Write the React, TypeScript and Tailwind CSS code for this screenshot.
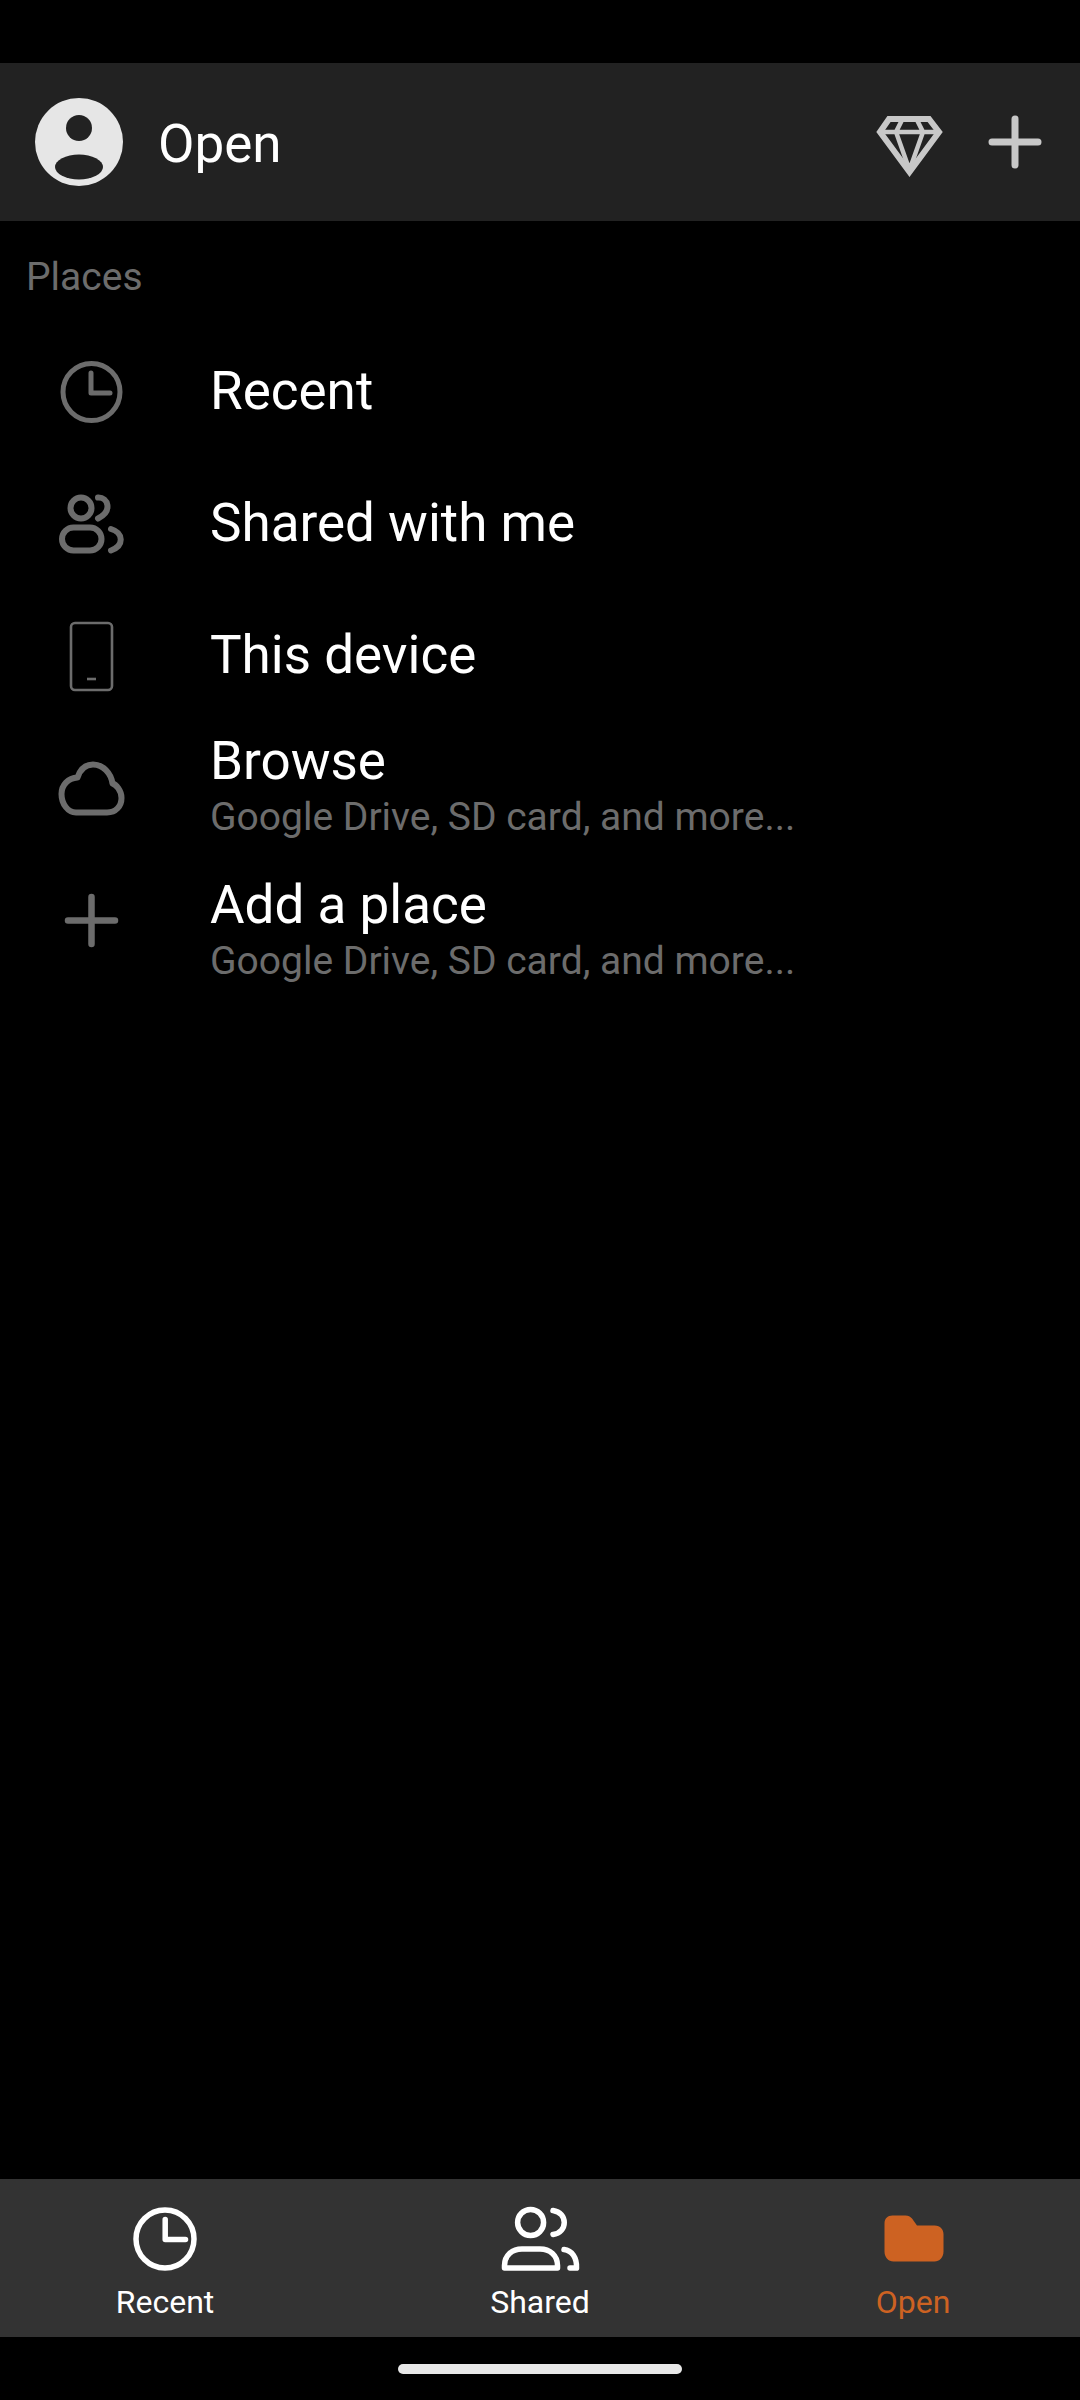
const GRAY = "#6c6c6c";

const ClockIcon = () => (
  <svg width="80" height="80" viewBox="52 352 80 80" fill="none" stroke={GRAY} strokeWidth="5">
    <circle cx="91.5" cy="392" r="28.5" />
    <path d="M91 373V393H110" strokeLinecap="round" strokeLinejoin="round" />
  </svg>
);

const PeopleIcon = () => (
  <svg width="80" height="80" viewBox="52 484 80 80" fill="none" stroke={GRAY} strokeWidth="6" strokeLinecap="round">
    <circle cx="81" cy="508" r="10.5" />
    <path d="M98 497.5C108 497 113 511 98 518.5" />
    <rect x="62" y="527.5" width="39.500" height="23" rx="11.5" />
    <path d="M111 529C124 533 124 546 111 550.5" />
  </svg>
);

const PhoneIcon = () => (
  <svg width="80" height="80" viewBox="52 616 80 80" fill="none" stroke={GRAY}>
    <rect x="71" y="623" width="41" height="67" rx="4" strokeWidth="2.6" />
    <path d="M87 679H96" strokeWidth="2.6" />
  </svg>
);

const CloudIcon = () => (
  <svg width="80" height="80" viewBox="52 748 80 80" fill="none" stroke={GRAY} strokeWidth="6">
    <path d="M76 812.5H107C116 812.5 121.5 806 121.5 798C121.5 790.5 116 784.5 112.5 783.5C111 773 103 764.5 93 764.5C85 764.5 80 770 77.5 777.5C68 778 61.5 785 61.5 794C61.5 804 68 812.5 76 812.5Z" strokeLinejoin="round" />
  </svg>
);

const PlusIcon = () => (
  <svg width="80" height="80" viewBox="52 880 80 80" fill="none" stroke={GRAY} strokeWidth="6.5" strokeLinecap="round">
    <path d="M91.5 897V944M68 920.5H115" />
  </svg>
);

const places = [
  { icon: <ClockIcon />, title: "Recent" },
  { icon: <PeopleIcon />, title: "Shared with me" },
  { icon: <PhoneIcon />, title: "This device" },
  { icon: <CloudIcon />, title: "Browse", sub: "Google Drive, SD card, and more...", },
  { icon: <PlusIcon />, title: "Add a place", sub: "Google Drive, SD card, and more...", shift: true },
];

export default function App() {
  return (
    <div className="flex h-[2400px] w-[1080px] flex-col overflow-hidden bg-black font-['Roboto',sans-serif] text-white">
      <div className="h-[63px] shrink-0" />

      {/* Header */}
      <header className="flex h-[158px] shrink-0 items-center bg-[#222222]">
        <svg className="ml-[35px]" width="88" height="88" viewBox="0 0 88 88">
          <circle cx="44" cy="44" r="44" fill="#e6e6e6" />
          <circle cx="44" cy="30" r="13" fill="#222222" />
          <ellipse cx="44" cy="69" rx="24" ry="12.5" fill="#222222" />
        </svg>
        <h1 className="ml-[35px] mt-[5px] text-[53px] font-normal leading-none">Open</h1>
        <svg className="ml-auto mt-[10px]" width="70" height="66" viewBox="875 114 70 66" fill="none" stroke="#c8c8c8" strokeWidth="6">
          <path d="M889 119H929L939 132L909.500 172L880 132Z" strokeLinejoin="miter" />
          <path d="M880 132H939M902 120L896 132L909.500 170L923 132L917 120" strokeWidth="4.500" />
        </svg>
        <svg className="ml-[40px] mr-[35px]" width="60" height="60" viewBox="985 112.500 60 60" fill="none" stroke="#c8c8c8" strokeWidth="7" strokeLinecap="round">
          <path d="M1015 119.500V165.500M992 142.500H1038" />
        </svg>
      </header>

      {/* Places */}
      <main className="flex-1">
        <div className="flex h-[105px] items-start pl-[26px] pt-[32px] text-[39px] leading-[48px] text-[#6c6c6c]">Places</div>
        <ul>
          {places.map((p) => (
            <li key={p.title} className="flex h-[132px] items-center">
              <div className="ml-[52px] mr-[78px] shrink-0">{p.icon}</div>
              <div className={p.shift ? "mt-[21px] whitespace-nowrap" : "mb-[3px] whitespace-nowrap"}>
                <div className="text-[53px] leading-[60px]">{p.title}</div>
                {p.sub && <div className="text-[39px] leading-[52px] text-[#6c6c6c]">{p.sub}</div>}
              </div>
            </li>
          ))}
        </ul>
      </main>

      {/* Bottom nav */}
      <nav className="flex h-[158px] shrink-0 items-start justify-between bg-[#333333] pl-[115px] pr-[117px]">
        <div className="flex w-[100px] flex-col items-center">
          <svg className="mt-[25px]" width="70" height="70" viewBox="130.500 2204.500 70 70" fill="none" stroke="#ffffff" strokeWidth="5.500">
            <circle cx="165.500" cy="2239.500" r="29" />
            <path d="M165.700 2220V2240H186" strokeLinecap="round" strokeLinejoin="round" />
          </svg>
          <span className="mt-[8px] whitespace-nowrap text-[32px] leading-[40px]">Recent</span>
        </div>
        <div className="ml-[2px] flex w-[100px] flex-col items-center">
          <svg className="mt-[25px]" width="90" height="70" viewBox="495 2204.500 90 70" fill="none" stroke="#ffffff" strokeWidth="5.500" strokeLinecap="round" strokeLinejoin="round">
            <circle cx="530.600" cy="2223" r="13" />
            <path d="M553 2211C568 2213 568 2233 553 2235" />
            <path d="M504.500 2268.500V2266C504.500 2256 512 2249.500 522 2249.500H540C550 2249.500 557.500 2256 557.500 2266V2268.500Z" />
            <path d="M564 2250C572 2251 577 2258 576.500 2268.500H570" />
          </svg>
          <span className="mt-[8px] whitespace-nowrap text-[32px] leading-[40px]">Shared</span>
        </div>
        <div className="flex w-[100px] flex-col items-center">
          <svg className="ml-[2px] mt-[25px]" width="70" height="70" viewBox="879.500 2204.500 70 70" fill="#cd6222">
            <path d="M893 2216H906C909 2216 910.500 2217 912.500 2219L917.500 2226H935C941 2226 944 2230 944 2235V2252C944 2258 940 2262 935 2262H894C889 2262 885 2258 885 2252V2224C885 2219 888 2216 893 2216Z" />
          </svg>
          <span className="mt-[8px] whitespace-nowrap text-[32px] leading-[40px] text-[#cd6222]">Open</span>
        </div>
      </nav>

      <div className="flex h-[63px] shrink-0 items-start justify-center pt-[27px]">
        <div className="h-[10px] w-[284px] rounded-full bg-[#e8e8e8]" />
      </div>
    </div>
  );
}
